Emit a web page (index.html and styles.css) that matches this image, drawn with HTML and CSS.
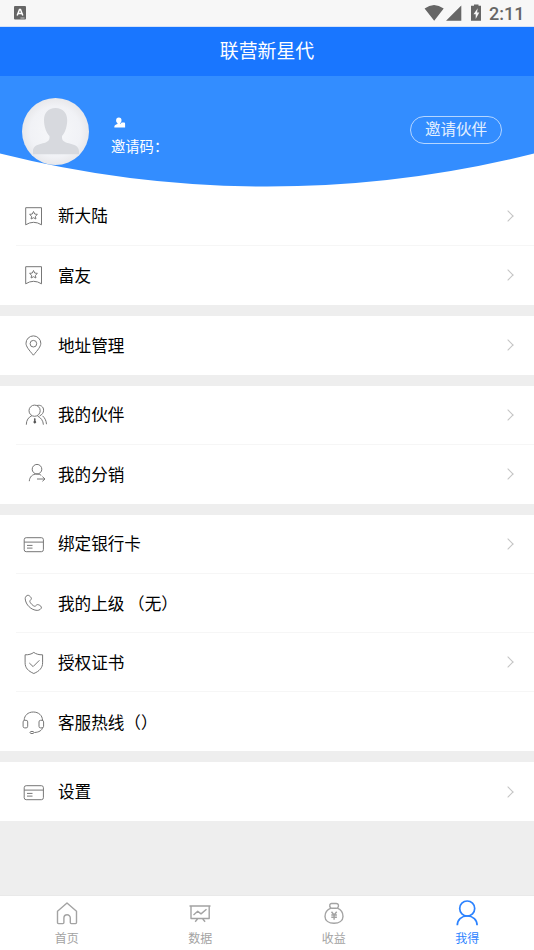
FILE: index.html
```html
<!DOCTYPE html>
<html lang="zh-CN">
<head>
<meta charset="utf-8">
<title>联营新星代</title>
<link rel="stylesheet" href="styles.css">
</head>
<body>
<svg class="defs" aria-hidden="true">
  <symbol id="bookmark" viewBox="0 0 36 36"><path d="M9.700 26.800V9.700h15.800v17.100q-7.900-5-15.800 0z"/><path d="m17.500 13.500 1.200 2.500 2.700.4-2 1.900.5 2.700-2.400-1.300-2.400 1.300.5-2.700-2-1.900 2.700-.4z"/></symbol>
  <symbol id="pin" viewBox="0 0 36 36"><path d="M17.400 28.200C13 23 10 19.500 10 16.300a7.400 7.400 0 0 1 14.800 0c0 3.200-3 6.700-7.400 11.900z"/><circle cx="17.400" cy="16.700" r="3.300"/></symbol>
  <symbol id="partners" viewBox="0 0 36 36"><circle cx="18.600" cy="13.700" r="5.600"/><path d="M10.300 27.700c0-4.500 2.200-7.500 5.600-9M21.500 19c3.300 1.700 5.700 4.500 5.900 8.700M20.800 8.600c4-1.200 6.800 1.300 6.800 4.600 0 2.600-1.600 4.600-4 5.700M26.500 18.800c2.100 2 3.700 4.300 4 8.400"/><path class="ink" d="m18.800 21 1 1-.5 1 1 2.200-1.500 1.600-1.500-1.600 1-2.200-.5-1z"/></symbol>
  <symbol id="share" viewBox="0 0 36 36"><circle cx="21" cy="13.200" r="4.800"/><path d="M13.300 25.200c.2-4.200 3-7.200 7.700-7.200 1.700 0 3.100.5 4.300 1.300M21 23h8M26.400 20.600 29 23l-2.600 2.300"/></symbol>
  <symbol id="card" viewBox="0 0 36 36"><rect x="8.200" y="11.700" width="19.200" height="14" rx="2"/><path d="M8.200 16.100h19.200M11 19.400h5.500M11 22.100h5.500"/></symbol>
  <symbol id="phone" viewBox="0 0 36 36"><path d="M12.300 10.300c-1.500-.3-3.200 1.500-3.100 3.400.4 6 6 11.500 12 11.700 2.200 0 4.600-1.700 4.200-3.300-.3-1.200-2.900-2.700-4-2.500-1.100.2-1.700 1.700-2.600 1.700-1.500 0-5-3.500-5-5 0-1 1.500-1.600 1.600-2.600.1-1.100-1.900-3.200-3.100-3.400z"/></symbol>
  <symbol id="shield" viewBox="0 0 36 36"><path d="M17.800 8.400c-2.300 1.700-5 2.500-8.700 2.400v8c0 5 3 8.300 8.700 10.700 5.700-2.400 8.800-5.700 8.800-10.700v-8c-3.700.1-6.500-.7-8.800-2.400zM13.300 19l3.800 3.600 6.300-6.300"/></symbol>
  <symbol id="headset" viewBox="0 0 36 36"><path d="M8.200 16.300C8.200 11.500 12 8 17.300 8s9.200 3.500 9.200 8.300M26.500 23.800c-.5 2.500-3.500 4.500-8 4.700"/><rect x="7.100" y="16.300" width="4.600" height="7.600" rx="1.600"/><rect x="23" y="16.300" width="4.600" height="7.600" rx="1.600"/><ellipse cx="16" cy="28.500" rx="2" ry="1.100"/></symbol>
</svg>

<header class="status">
  <svg class="status-app" viewBox="0 0 12 14"><rect width="12" height="13.500" rx="1" fill="#666"/><path d="m3.200 9.500 2.300-6h1l2.300 6M4.200 7.500h3.600" fill="none" stroke="#fff" stroke-width="1.500"/><path d="M6.500 12h4" stroke="#ddd" stroke-width=".8"/></svg>
  <svg class="status-icons" viewBox="0 0 60 18" fill="#666"><path d="M.6 4.500Q10 -2.500 19.700 4.500L10.200 16.800zM37.300 1.500v15.300H22z"/><path fill-rule="evenodd" d="M50 1.800V.4h4.500v1.400H57v15H47v-15zM53.700 4.300l-4.200 6h2.200v4.800l3.600-6.500h-2.200z"/></svg>
  <span class="clock">2:11</span>
</header>
<h1 class="title">联营新星代</h1>

<section class="profile">
  <svg class="curve" viewBox="0 0 534 111" preserveAspectRatio="none"><path d="M0 0H534V77.500A1096 1096 0 0 1 0 77.500z"/></svg>
  <svg class="avatar" viewBox="0 0 67 67"><defs><radialGradient id="face"><stop offset="0" stop-color="#f7f8fa"/><stop offset=".75" stop-color="#f1f2f6"/><stop offset="1" stop-color="#e8e8eb"/></radialGradient></defs><circle cx="33.500" cy="33.500" r="33.500" fill="url(#face)"/><path fill="#d7d9de" d="M33.500 10C41 10 45.200 15 45.200 22c0 7-2.300 13-5.200 16v1.800c0 8 17 3.500 17 13.500v3H11v-3c0-10 16.500-5.500 16.500-13.500V38C24.500 35 22 29 22 22c0-7 4-12 11.500-12z"/></svg>
  <div class="who">
    <svg class="badge" viewBox="0 0 12 11"><path fill="#fff" d="M4.800.5c1.900 0 2.800 1.300 2.700 2.900-.1 1.300-.6 2.100-1.200 2.700v.8l.5.200c0-1 .6-1.500 1.400-1.500h1.600c.9 0 1.300.5 1.300 1.300v3.500H.3c-.1-2 1-2.600 3.200-3.300v-.9C2.500 5.400 2.100 4.600 2.100 3.500 2.100 1.700 3 .5 4.800.5z"/></svg>
    <span>邀请码：</span>
  </div>
  <a class="invite">邀请伙伴</a>
</section>

<main>
  <section class="group">
    <a class="row"><svg class="icon"><use href="#bookmark"/></svg><span class="label">新大陆</span><i class="arrow"></i></a>
    <a class="row"><svg class="icon"><use href="#bookmark"/></svg><span class="label">富友</span><i class="arrow"></i></a>
  </section>
  <section class="group">
    <a class="row"><svg class="icon"><use href="#pin"/></svg><span class="label">地址管理</span><i class="arrow"></i></a>
  </section>
  <section class="group">
    <a class="row"><svg class="icon"><use href="#partners"/></svg><span class="label">我的伙伴</span><i class="arrow"></i></a>
    <a class="row"><svg class="icon"><use href="#share"/></svg><span class="label">我的分销</span><i class="arrow"></i></a>
  </section>
  <section class="group">
    <a class="row"><svg class="icon"><use href="#card"/></svg><span class="label">绑定银行卡</span><i class="arrow"></i></a>
    <a class="row"><svg class="icon"><use href="#phone"/></svg><span class="label">我的上级 （无）</span></a>
    <a class="row"><svg class="icon"><use href="#shield"/></svg><span class="label">授权证书</span><i class="arrow"></i></a>
    <a class="row"><svg class="icon"><use href="#headset"/></svg><span class="label">客服热线（）</span></a>
  </section>
  <section class="group">
    <a class="row"><svg class="icon"><use href="#card"/></svg><span class="label">设置</span><i class="arrow"></i></a>
  </section>
</main>

<nav class="tabs">
  <a class="tab"><svg viewBox="0 0 28 28"><path d="M4.500 12.200 14 4l9.500 8.200v11.400q0 1-1 1h-4.200q-1 0-1-1V19a3.200 3.200 0 0 0-6.400 0v4.600q0 1-1 1H5.500q-1 0-1-1z"/></svg><span>首页</span></a>
  <a class="tab"><svg viewBox="0 0 28 28"><path d="M3.500 7h21M5 7v12.500h18.200V7M7.500 16l4.200-3.700 3.300 2.600 5.500-4.600M11.500 20l-2.300 2.800M16.800 20l2.300 2.800"/></svg><span>数据</span></a>
  <a class="tab"><svg viewBox="0 0 28 28"><path d="M11 9.200C8.500 6.500 10 4.200 12 4.500h4.200c2.500 0 3.100 2.500 1.200 4.700 3.400 1.500 5.600 4.800 5.600 8.200 0 4.500-4 6.800-9 6.800s-9-2.300-9-6.800c0-3.400 2.300-6.700 6-8.200zM11.300 9.200h5.500"/><path d="m11.500 12.800 2.600 3.200 2.600-3.200M11.300 16h5.600M11.300 18.300h5.600M14.100 16v4.800"/></svg><span>收益</span></a>
  <a class="tab active"><svg viewBox="0 0 28 28"><circle cx="14.200" cy="9.500" r="7.500"/><path d="M4.300 26.300c0-5.500 4-9.300 9.900-9.300s9.900 3.800 9.900 9.300"/></svg><span>我得</span></a>
</nav>
</body>
</html>
```
FILE: styles.css
```css
* { box-sizing: border-box; }

body {
  margin: 0;
  height: 950px;
  display: flex;
  flex-direction: column;
  overflow: hidden;
  background: #eee;
  color: #000;
  font-family: "Noto Sans CJK SC", "Noto Sans", sans-serif;
}

.defs { position: absolute; width: 0; height: 0; }

.status {
  flex: none;
  height: 27px;
  display: flex;
  align-items: center;
  padding: 0 10px 0 14px;
  background: #f7f7f7;
  border-bottom: 1px solid #d5e2f8;
}
.status-app { width: 12px; height: 14px; }
.status-icons { width: 60px; height: 18px; margin-left: auto; }
.clock {
  margin-left: 5px;
  width: 35px;
  color: #666;
  font: 500 18px/26px Roboto, sans-serif;
  padding-top: 2px;
}

.title {
  flex: none;
  margin: 0;
  height: 49px;
  background: #1976ff;
  color: #fff;
  font-size: 18.9px;
  font-weight: 400;
  line-height: 45px;
  text-align: center;
}

.profile {
  flex: none;
  position: relative;
  height: 110.7px;
  display: flex;
  align-items: flex-start;
  padding: 22px 32px 0 22px;
  background: #fff;
  color: #fff;
}
.curve {
  position: absolute;
  top: 0;
  left: 0;
  width: 100%;
  height: 111px;
  fill: #338dff;
}
.avatar, .who, .invite { position: relative; }
.avatar { width: 67px; height: 67px; }
.who {
  display: flex;
  flex-direction: column;
  margin: 19px 0 0 22px;
  font-size: 14.3px;
  line-height: 22px;
}
.badge { width: 12px; height: 11px; margin: 0 0 7px 3px; }
.invite {
  margin: 18px 0 0 auto;
  width: 92px;
  height: 28px;
  border: 1px solid #b5d6ff;
  border-radius: 14px;
  color: #e4f0ff;
  font-size: 15.5px;
  line-height: 22px;
  text-align: center;
}

.group { margin-bottom: 10.7px; background: #fff; }
.row {
  display: flex;
  align-items: center;
  height: 59.2px;
  margin-left: 16px;
  padding-right: 22px;
}
.row:not(:last-child) { border-bottom: 1px solid #f6f6f6; }
.icon {
  width: 36px;
  height: 36px;
  fill: none;
  stroke: #777;
  stroke-width: 1;
}
.ink { fill: #555; stroke: none; }
.label {
  margin-left: 6px;
  padding-bottom: .6px;
  font-size: 16.6px;
  line-height: 24px;
  white-space: pre;
}
.arrow {
  width: 8px;
  height: 8px;
  margin-left: auto;
  border: solid #c4c4c4;
  border-width: 1px 1px 0 0;
  transform: rotate(45deg);
}

.tabs {
  flex: none;
  height: 55px;
  margin-top: auto;
  display: grid;
  grid-template-columns: repeat(4, 1fr);
  background: #fff;
  border-top: 1px solid #e9e9e9;
}
.tab {
  display: flex;
  flex-direction: column;
  align-items: center;
  padding-top: 3px;
  color: #a3a3a3;
  font-size: 12px;
  line-height: 18px;
}
.tab svg {
  width: 28px;
  height: 28px;
  margin-bottom: 1.5px;
  fill: none;
  stroke: currentColor;
  stroke-width: 1.4;
  stroke-linejoin: round;
}
.active { color: #2b82ff; }
.active svg { stroke-width: 1.7; }
```
